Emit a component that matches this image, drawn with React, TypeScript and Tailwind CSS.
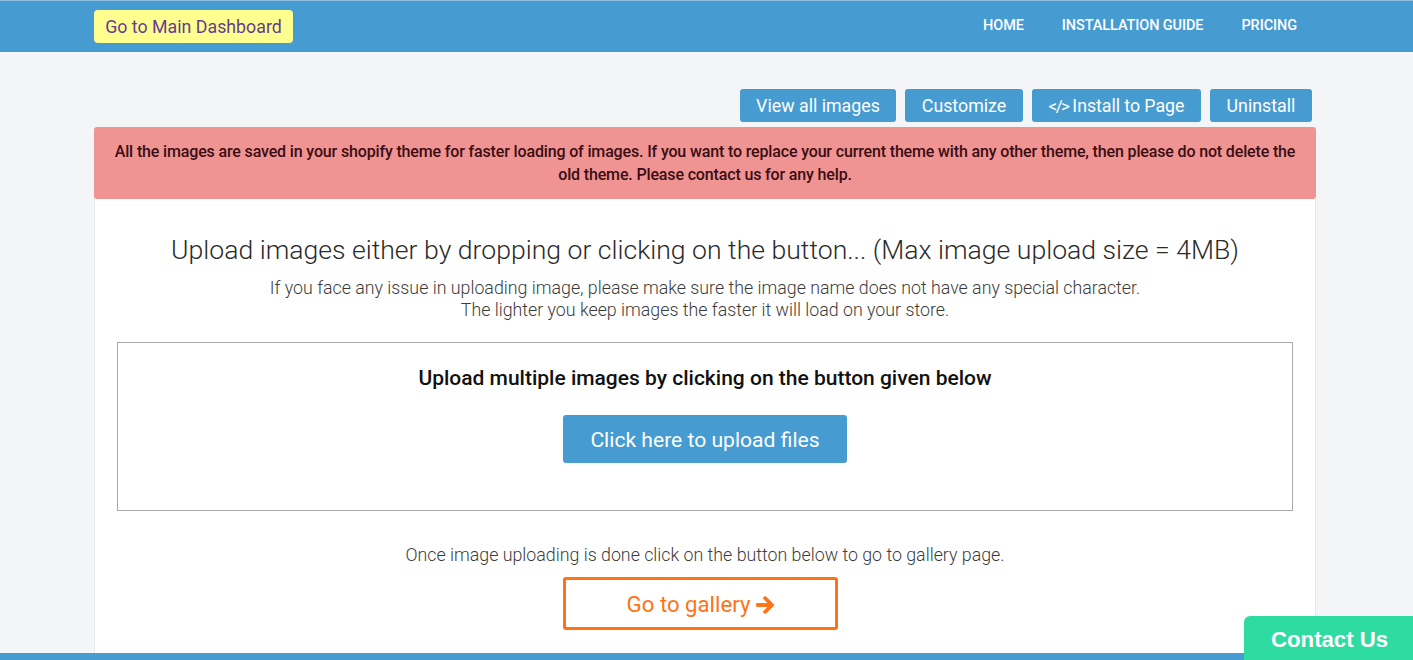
import React from "react";

function ArrowRight() {
  return (
    <svg viewBox="0 0 448 512" className="w-[18px] h-[20px] fill-[#ff7315] stroke-[#ff7315] stroke-[24]" aria-hidden="true">
      <path d="M190.5 66.9l22.2-22.2c9.4-9.4 24.6-9.4 33.9 0L441 239c9.4 9.4 9.4 24.6 0 33.9L246.6 467.3c-9.4 9.4-24.6 9.4-33.9 0l-22.2-22.2c-9.5-9.5-9.3-25 .4-34.3L311.4 296H24c-13.3 0-24-10.7-24-24v-32c0-13.3 10.7-24 24-24h287.4L190.9 101.2c-9.8-9.3-10-24.8-.4-34.3z" />
    </svg>
  );
}

const topButton = "h-[33px] flex items-center justify-center bg-[#469bd1] text-white text-[17.8px] rounded-[3px] pt-[2px]";

export default function App() {
  return (
    <div className="relative h-[660px] overflow-hidden bg-[#f4f5f7] flex flex-col font-['Roboto',sans-serif]">
      <header className="h-[52px] shrink-0 bg-[#469bd1] border-t border-t-[#8fc0e0] pl-[94px] pr-[116px] flex items-center justify-between">
        <a className="h-[33px] w-[199px] flex items-center justify-center bg-[#ffff8f] text-[#663d8c] text-[17.8px] rounded-[4px] pt-[2px]">
          Go to Main Dashboard
        </a>
        <nav className="flex items-center gap-[38px] text-white text-[14.5px] font-medium -mt-[2px] tracking-[-0.1px]">
          <a>HOME</a>
          <a>INSTALLATION GUIDE</a>
          <a>PRICING</a>
        </nav>
      </header>

      <main className="flex-1 min-h-0 w-[1222px] ml-[94px] flex flex-col">
        <div className="flex justify-end gap-[9px] pt-[37px] pr-[4px] pb-[5px]">
          <a className={`${topButton} w-[156px]`}>View all images</a>
          <a className={`${topButton} w-[118px]`}>Customize</a>
          <a className={`${topButton} w-[169px] gap-[4px]`}>
            <span className="tracking-[-1.6px] text-[17px]">&lt;/&gt;</span>
            <span className="tracking-[-0.05px]">Install to Page</span>
          </a>
          <a className={`${topButton} w-[102px]`}>Uninstall</a>
        </div>

        <div className="h-[72px] shrink-0 bg-[#f09393] rounded-[3px] text-[#3a0d12] text-[16px] font-medium leading-[23px] text-center px-[16px] pt-[13px] tracking-[-0.15px]">
          All the images are saved in your shopify theme for faster loading of images. If you want to replace your current theme with any other theme, then please do not delete the old theme. Please contact us for any help.
        </div>

        <section className="flex-1 min-h-0 bg-white border-x border-x-[#e8e9ec] flex flex-col items-center px-[22px]">
          <h2 className="mt-[33px] text-[26.6px] leading-[36px] font-light text-[#2b2b2b]">
            Upload images either by dropping or clicking on the button... (Max image upload size = 4MB)
          </h2>
          <p className="mt-[9px] text-[17.8px] leading-[22px] font-light text-[#3c3c3c] text-center">
            If you face any issue in uploading image, please make sure the image name does not have any special character.
            <br />
            The lighter you keep images the faster it will load on your store.
          </p>
          <div className="mt-[21px] w-[1176px] h-[169px] shrink-0 border border-[#aaaaaa] flex flex-col items-center">
            <div className="mt-[23px] text-[21px] leading-[24px] font-medium text-[#111111]">
              Upload multiple images by clicking on the button given below
            </div>
            <button className="mt-[25px] w-[284px] h-[48px] pt-[2px] bg-[#469bd1] text-white text-[21.1px] rounded-[3px]">
              Click here to upload files
            </button>
          </div>
          <p className="mt-[33px] text-[17.8px] leading-[22px] font-light text-[#3c3c3c]">
            Once image uploading is done click on the button below to go to gallery page.
          </p>
          <button className="mt-[11px] w-[275px] h-[53px] shrink-0 -ml-[9px] pt-[2px] flex items-center justify-center gap-[6px] border-[3px] border-[#ff7315] rounded-[3px] text-[#ff7315] text-[22.2px]">
            Go to gallery
            <ArrowRight />
          </button>
        </section>
      </main>

      <footer className="h-[7px] shrink-0 bg-[#469bd1]" />

      <a className="absolute right-0 bottom-0 w-[169px] h-[44px] bg-[#2edba1] rounded-tl-[6px] text-white text-[22.2px] font-bold font-['Liberation_Sans',sans-serif] flex items-center pl-[27px] pt-[3px]">
        Contact Us
      </a>
    </div>
  );
}
